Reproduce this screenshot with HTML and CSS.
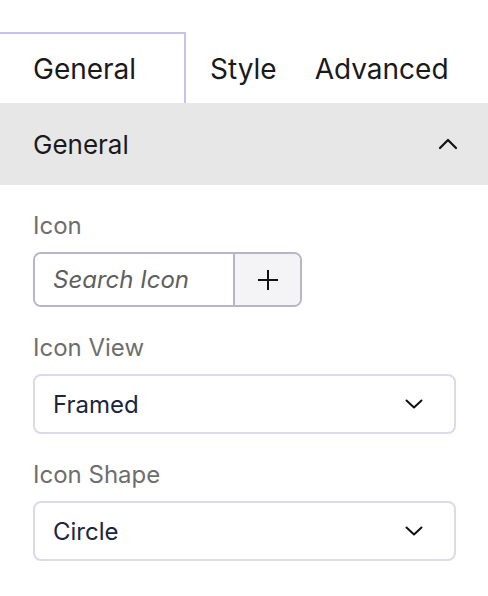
FILE: index.html
```html
<!DOCTYPE html>
<html lang="en">
<head>
    <meta charset="UTF-8">
    <meta name="viewport" content="width=device-width, initial-scale=1.0">
    <title>Icon Widget Settings</title>
    <link rel="stylesheet" href="styles.css">
</head>
<body>
    <nav class="tabs">
        <div class="tab active">General</div>
        <div class="tab">Style</div>
        <div class="tab">Advanced</div>
    </nav>
    <section class="panel">
        <div class="panel-header">
            <span>General</span>
            <svg class="chevron" width="20" height="12" viewBox="0 0 20 12">
                <path d="M2 10 L10 2 L18 10" fill="none" stroke="#111" stroke-width="2.2" stroke-linecap="round" stroke-linejoin="round"/>
            </svg>
        </div>
        <div class="panel-body">
            <div class="field">
                <label class="field-label">Icon</label>
                <div class="icon-picker">
                    <input type="text" class="icon-search" placeholder="Search Icon">
                    <button class="icon-add">
                        <svg width="24" height="24" viewBox="0 0 24 24">
                            <path d="M12 2 V22 M2 12 H22" stroke="#111" stroke-width="2"/>
                        </svg>
                    </button>
                </div>
            </div>
            <div class="field">
                <label class="field-label">Icon View</label>
                <div class="select">
                    <span>Framed</span>
                    <svg width="18" height="10" viewBox="0 0 18 10">
                        <path d="M1.5 1.5 L9 8.5 L16.5 1.5" fill="none" stroke="#111" stroke-width="2" stroke-linecap="round" stroke-linejoin="round"/>
                    </svg>
                </div>
            </div>
            <div class="field">
                <label class="field-label">Icon Shape</label>
                <div class="select">
                    <span>Circle</span>
                    <svg width="18" height="10" viewBox="0 0 18 10">
                        <path d="M1.5 1.5 L9 8.5 L16.5 1.5" fill="none" stroke="#111" stroke-width="2" stroke-linecap="round" stroke-linejoin="round"/>
                    </svg>
                </div>
            </div>
        </div>
    </section>
</body>
</html>
```

FILE: styles.css
```css
:root {
    --tab-border: #c9c0f2;
    --header-bg: #e7e7e7;
    --label-color: #6e6e6e;
    --value-color: #1b2540;
    --picker-border: #b7b5cb;
    --select-border: #dcd9ea;
}
body {
    margin: 0;
    padding: 0;
    font-family: Inter, "Noto Sans", sans-serif;
    background-color: #ffffff;
    color: #1a1a1a;
}
/* Tabs */
.tabs {
    display: flex;
    align-items: stretch;
    padding-top: 32px;
}
.tab {
    font-size: 28px;
    line-height: 67px;
    padding-top: 2px;
    border-top: 2px solid transparent;
}
.tab.active {
    width: 186px;
    box-sizing: border-box;
    padding-left: 33px;
    border-top: 2px solid var(--tab-border);
    border-right: 2px solid var(--tab-border);
}
.tab + .tab {
    padding-left: 24px;
    padding-right: 14px;
}
/* Panel */
.panel-header {
    display: flex;
    align-items: center;
    justify-content: space-between;
    height: 82px;
    padding: 0 30px 0 33px;
    background-color: var(--header-bg);
    font-size: 26px;
}
.panel-body {
    display: flex;
    flex-direction: column;
    gap: 26px;
    padding: 26px 32px 0 33px;
}
.field {
    display: flex;
    flex-direction: column;
    gap: 11px;
}
.field-label {
    font-size: 24px;
    line-height: 30px;
    color: var(--label-color);
}
/* Icon picker */
.icon-picker {
    display: flex;
    width: 269px;
    height: 55px;
    box-sizing: border-box;
    border: 2px solid var(--picker-border);
    border-radius: 8px;
    overflow: hidden;
}
.icon-search {
    flex: 0 0 200px;
    width: 200px;
    box-sizing: border-box;
    border: none;
    border-right: 2px solid var(--picker-border);
    padding: 0 0 0 18px;
    font-family: inherit;
    font-size: 24px;
    font-style: italic;
    outline: none;
}
.icon-search::placeholder {
    color: #5f5f5f;
}
.icon-add {
    flex: 1;
    display: flex;
    align-items: center;
    justify-content: center;
    border: none;
    background-color: #f4f4f6;
    padding: 0;
}
/* Selects */
.select {
    display: flex;
    align-items: center;
    justify-content: space-between;
    height: 60px;
    box-sizing: border-box;
    padding: 0 31px 0 18px;
    border: 2px solid var(--select-border);
    border-radius: 8px;
    font-size: 24px;
    color: var(--value-color);
}
```
